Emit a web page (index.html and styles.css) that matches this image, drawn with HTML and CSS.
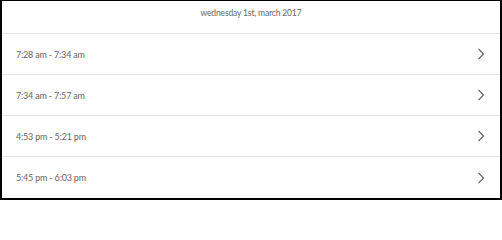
FILE: index.html
```html
<!DOCTYPE html>
<html>
<head>
<meta charset="utf-8">
<link rel="stylesheet" href="styles.css">
</head>
<body>
<div class="panel">
  <div class="header">wednesday 1st, march 2017</div>
  <div class="row"><span class="time">7:28 am - 7:34 am</span><svg class="chev" width="8" height="12" viewBox="0 0 8 12"><polyline points="1.5,0.8 6.5,6 1.5,11.2" fill="none" stroke="#555" stroke-width="1.1"/></svg></div>
  <div class="row"><span class="time">7:34 am - 7:57 am</span><svg class="chev" width="8" height="12" viewBox="0 0 8 12"><polyline points="1.5,0.8 6.5,6 1.5,11.2" fill="none" stroke="#555" stroke-width="1.1"/></svg></div>
  <div class="row"><span class="time">4:53 pm - 5:21 pm</span><svg class="chev" width="8" height="12" viewBox="0 0 8 12"><polyline points="1.5,0.8 6.5,6 1.5,11.2" fill="none" stroke="#555" stroke-width="1.1"/></svg></div>
  <div class="row last"><span class="time">5:45 pm - 6:03 pm</span><svg class="chev" width="8" height="12" viewBox="0 0 8 12"><polyline points="1.5,0.8 6.5,6 1.5,11.2" fill="none" stroke="#555" stroke-width="1.1"/></svg></div>
</div>
</body>
</html>
```
FILE: styles.css
```css
html, body {
  margin: 0;
  padding: 0;
  background: #fff;
}
.panel {
  box-sizing: border-box;
  width: 502px;
  height: 200px;
  border-top: 1px solid #000;
  border-left: 2px solid #000;
  border-right: 2px solid #000;
  border-bottom: 2px solid #000;
  font-family: "Lato", "Open Sans", sans-serif;
  color: #666;
  display: flex;
  flex-direction: column;
}
.header {
  height: 33px;
  flex: none;
  border-bottom: 1px solid #e6e6e6;
  display: flex;
  align-items: center;
  justify-content: center;
  font-size: 8.5px;
  letter-spacing: -0.15px;
  padding-bottom: 8px;
  box-sizing: border-box;
}
.row {
  height: 41px;
  flex: none;
  box-sizing: border-box;
  border-bottom: 1px solid #e6e6e6;
  display: flex;
  align-items: center;
  justify-content: space-between;
  padding: 0 15px 0 14px;
  font-size: 9px;
  letter-spacing: -0.2px;
}
.row.last {
  border-bottom: none;
  flex: 1;
}
.chev {
  display: block;
}
```
